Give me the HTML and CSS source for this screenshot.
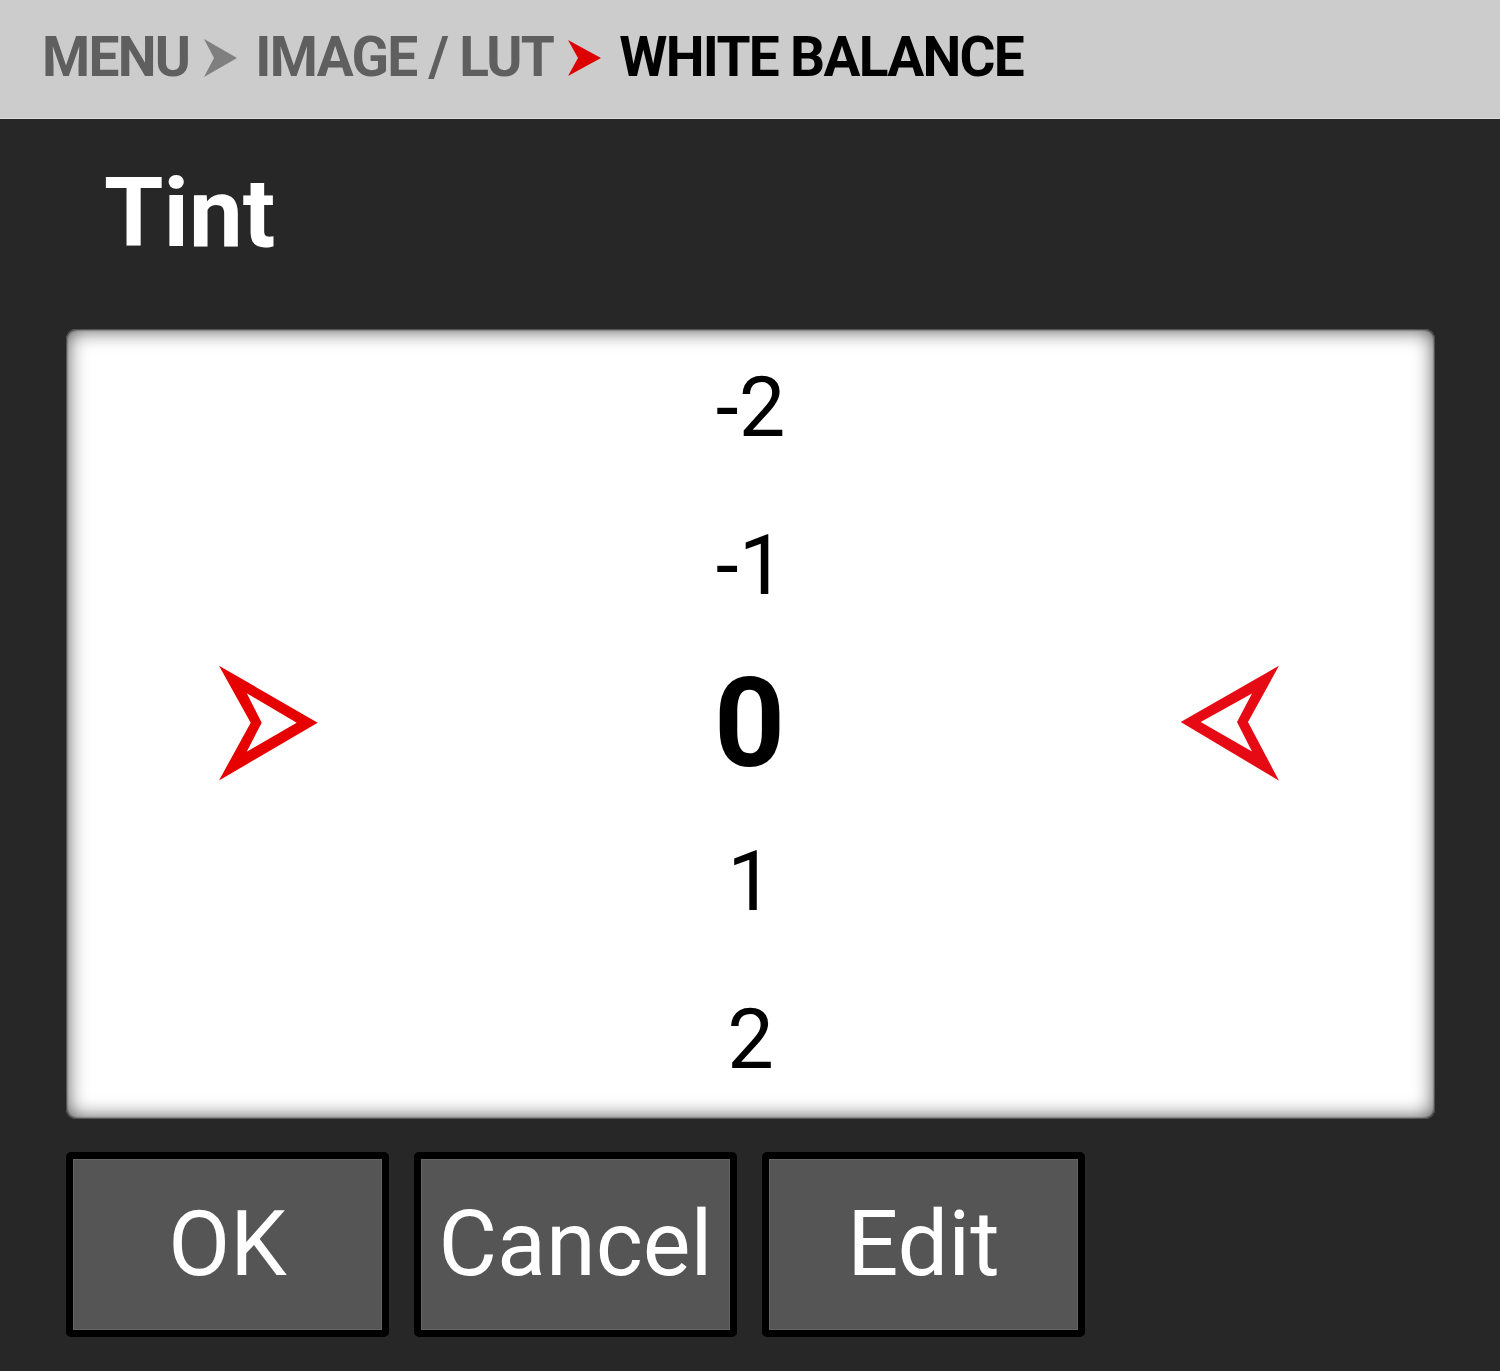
FILE: index.html
```html
<!DOCTYPE html>
<html>
<head>
<meta charset="utf-8">
<link rel="stylesheet" href="styles.css">
</head>
<body>
<header class="crumbs">
  <span class="crumb">MENU</span>
  <svg class="sep" width="33" height="38" viewBox="0 0 33 38"><path d="M0 0 L33 19 L0 38 L10 19 Z" fill="#7f7f7f"/></svg>
  <span class="crumb">IMAGE / LUT</span>
  <svg class="sep" width="33" height="38" viewBox="0 0 33 38"><path d="M0 1 L33 19 L0 37 L10 19 Z" fill="#dd0000"/></svg>
  <span class="crumb current">WHITE BALANCE</span>
</header>
<main class="content">
  <h1 class="title">Tint</h1>
  <section class="picker">
    <div class="row">-2</div>
    <div class="row">-1</div>
    <div class="row row-current">
      <svg class="marker" width="100" height="116" viewBox="219 665 100 116"><path fill-rule="evenodd" fill="#e60000" d="M219 665.7 L317.7 722.7 L219 780.5 L250.7 722.7 Z M246.7 693.3 L261.7 722.7 L246.7 751.7 L296.7 722.7 Z"/></svg>
      <span class="value">0</span>
      <svg class="marker" width="100" height="116" viewBox="1181 666 100 116"><path fill-rule="evenodd" fill="#e60a14" d="M1181.7 723 L1280 666.7 L1249 723 L1280 781.7 Z M1201.7 723 L1253 752.5 L1238 723 L1253 694.5 Z"/></svg>
    </div>
    <div class="row">1</div>
    <div class="row">2</div>
  </section>
  <div class="actions">
    <button class="btn">OK</button>
    <button class="btn">Cancel</button>
    <button class="btn">Edit</button>
  </div>
</main>
</body>
</html>
```

FILE: styles.css
```css
html, body {
  margin: 0;
  padding: 0;
}
body {
  background: #272727;
  font-family: Roboto, "Liberation Sans", sans-serif;
  width: 1500px;
  height: 1371px;
  overflow: hidden;
}
.crumbs {
  height: 114px;
  padding: 0 0 4px 42px;
  background: #cccccc;
  border-bottom: 1px solid #dadada;
  display: flex;
  align-items: center;
  gap: 18px;
}
.crumb {
  font-size: 55px;
  font-weight: 700;
  color: #5f5f5f;
  line-height: 1;
  letter-spacing: -1.7px;
  margin-right: -3px;
}
.crumb.current {
  color: #000;
}
.sep {
  display: block;
  margin-top: 2px;
}
.content {
  padding: 0 65px 0 66px;
}
.title {
  margin: 46px 0 0 38px;
  font-size: 96px;
  line-height: 96px;
  font-weight: 700;
  color: #fff;
}
.picker {
  margin-top: 68px;
  height: 790px;
  background: #fff;
  border-radius: 10px;
  box-shadow: inset 0 0 2px 1px rgba(0,0,0,0.65), inset 0 0 20px 1px rgba(0,0,0,0.7);
  display: flex;
  flex-direction: column;
}
.row {
  height: 158px;
  line-height: 158px;
  text-align: center;
  font-size: 83px;
  color: #000;
}
.row-current {
  display: flex;
  align-items: center;
  justify-content: space-between;
  padding: 0 155px 0 153px;
}
.marker {
  display: block;
  margin-top: -2px;
}
.value {
  font-size: 124px;
  font-weight: 700;
  line-height: 158px;
}
.actions {
  margin-top: 33px;
  display: flex;
  gap: 25px;
}
.btn {
  width: 323px;
  height: 185px;
  box-sizing: border-box;
  border: 7px solid #000;
  border-radius: 5px;
  background: #555555;
  box-shadow: inset 0 0 0 1px #646464;
  color: #fff;
  font-family: Roboto, "Liberation Sans", sans-serif;
  font-size: 90px;
  font-weight: 400;
  padding: 0;
}
```
